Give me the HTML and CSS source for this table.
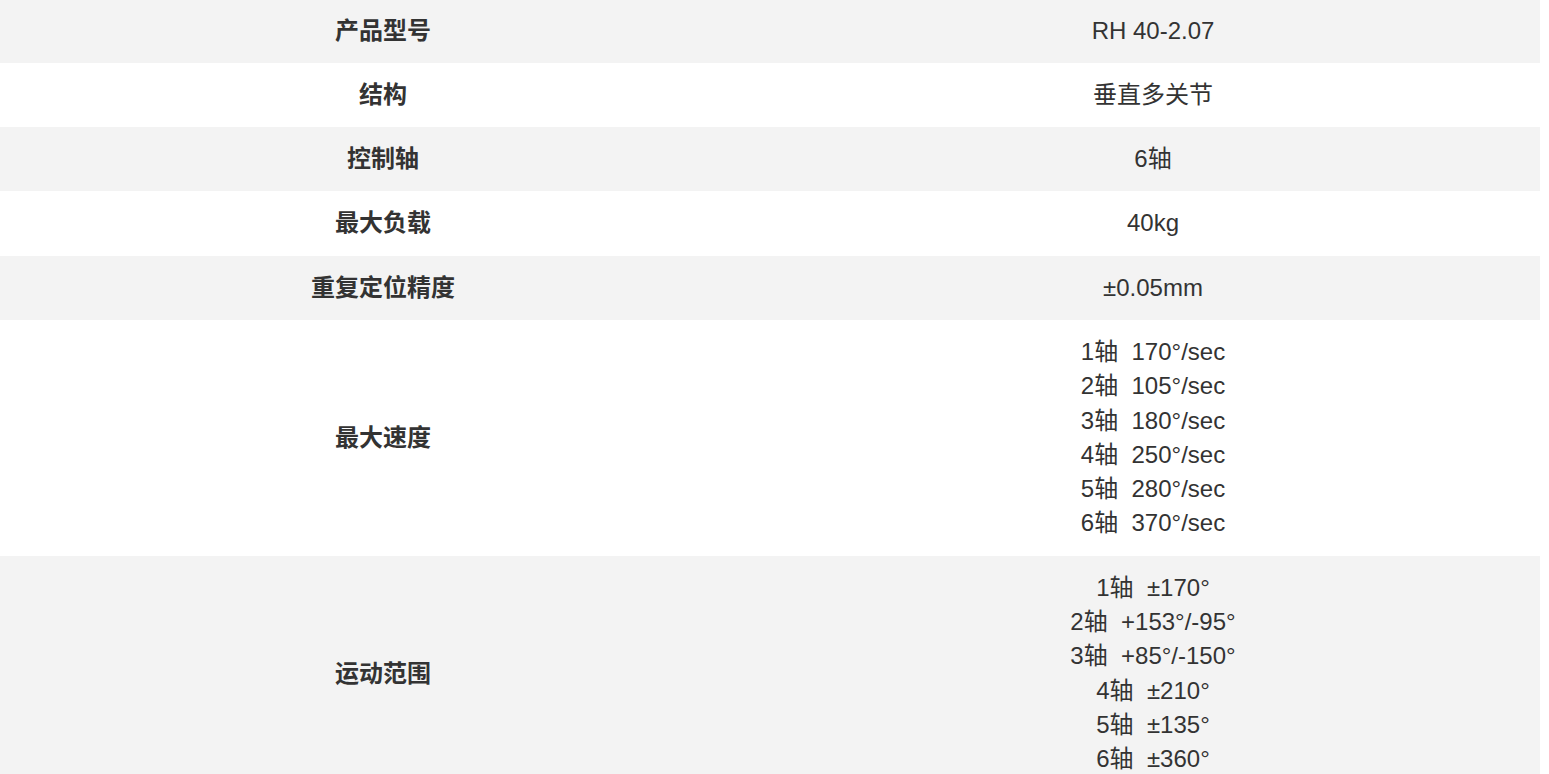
FILE: index.html
```html
<!DOCTYPE html>
<html lang="zh-CN">
<head>
<meta charset="utf-8">
<title>RH 40-2.07</title>
<link rel="stylesheet" href="styles.css">
</head>
<body>
<table class="spec">
  <tbody>
    <tr class="odd"><th>产品型号</th><td>RH 40-2.07</td></tr>
    <tr><th>结构</th><td>垂直多关节</td></tr>
    <tr class="odd"><th>控制轴</th><td>6轴</td></tr>
    <tr><th>最大负载</th><td>40kg</td></tr>
    <tr class="odd"><th>重复定位精度</th><td>±0.05mm</td></tr>
    <tr><th>最大速度</th><td>1轴&nbsp;&nbsp;170°/sec<br>2轴&nbsp;&nbsp;105°/sec<br>3轴&nbsp;&nbsp;180°/sec<br>4轴&nbsp;&nbsp;250°/sec<br>5轴&nbsp;&nbsp;280°/sec<br>6轴&nbsp;&nbsp;370°/sec</td></tr>
    <tr class="odd"><th>运动范围</th><td>1轴&nbsp;&nbsp;±170°<br>2轴&nbsp;&nbsp;+153°/-95°<br>3轴&nbsp;&nbsp;+85°/-150°<br>4轴&nbsp;&nbsp;±210°<br>5轴&nbsp;&nbsp;±135°<br>6轴&nbsp;&nbsp;±360°</td></tr>
  </tbody>
</table>
</body>
</html>
```
FILE: styles.css
```css
html, body {
  margin: 0;
  padding: 0;
  background: #ffffff;
}

body {
  font-family: "Liberation Sans", Arial, "Noto Sans CJK SC", sans-serif;
  font-size: 24px;
  color: #333333;
}

.spec {
  width: 1540px;
  border-collapse: collapse;
  border-spacing: 0;
  margin-top: -1.5px;
  table-layout: fixed;
}

.spec th,
.spec td {
  padding: 15px 0;
  line-height: 34.3px;
  text-align: center;
  vertical-align: middle;
}

.spec th {
  width: 766px;
  font-weight: bold;
}

.spec td {
  width: 774px;
  font-weight: normal;
}

.spec tr.odd {
  background: #f3f3f3;
}
```
